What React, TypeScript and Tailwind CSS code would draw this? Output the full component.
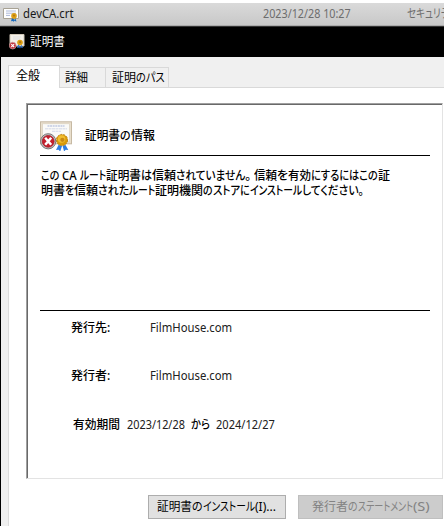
import { useLayoutEffect, useRef, useState } from "react";

const JP = "font-['Noto_Sans','Noto_Sans_CJK_JP',sans-serif]";

// A run of text condensed or widened to the width its class gives it.
function Run({ w, children }: { w: string; children: string }) {
  const outer = useRef<HTMLSpanElement>(null);
  const inner = useRef<HTMLSpanElement>(null);
  const [scale, setScale] = useState(1);
  useLayoutEffect(() => {
    if (outer.current && inner.current) {
      setScale(outer.current.clientWidth / inner.current.offsetWidth);
    }
  }, [children]);
  return (
    <span ref={outer} className={`flex shrink-0 ${w}`}>
      <span
        ref={inner}
        className="shrink-0 origin-left whitespace-pre [font-feature-settings:'palt']"
        style={{ transform: `scaleX(${scale})` }}
      >
        {children}
      </span>
    </span>
  );
}

function Rosette() {
  return (
    <g>
      <path d="M18.5 24l-2.5 5 2.6-.2 1.6 1.7 2-6zM25.5 24l2.8 5-2.6-.2-1.6 1.7-1.6-6z" fill="#2f7de0" />
      <circle cx="22" cy="19" r="5.6" fill="#d99a08" stroke="#c08410" strokeWidth="1" strokeDasharray="2 1" />
      <circle cx="21.6" cy="18" r="3.8" fill="#f1bd30" />
      <circle cx="22.4" cy="18.8" r="2.1" fill="#c88912" />
    </g>
  );
}

function InvalidCertificate({ className }: { className: string }) {
  return (
    <svg viewBox="0 0 34 30" className={className}>
      <rect x=".5" y=".8" width="31" height="22" fill="#e9dfcd" stroke="#c6b9a3" />
      <rect x="2.5" y="2.8" width="27" height="18" fill="#fafaf8" stroke="#d8cdba" strokeWidth=".6" />
      <path d="M7.5 5h17" stroke="#a3b0d5" strokeWidth="1" strokeDasharray="2 .6" />
      <path d="M5 7.8h22M12 10.3h9" stroke="#c9d0e4" strokeWidth=".8" strokeDasharray="3 .5" />
      <Rosette />
      <circle cx="8.2" cy="20.3" r="7.6" fill="#c4c4c4" stroke="#777" strokeWidth="1" />
      <circle cx="8.2" cy="20.3" r="5.9" fill="#c51f2d" stroke="#a21420" strokeWidth=".7" />
      <path d="M5.2 16.8l6 7M11.2 16.8l-6 7" stroke="white" strokeWidth="2.5" />
    </svg>
  );
}

function SmallInvalid() {
  return (
    <svg viewBox="0 0 16 16" className="h-4 w-4 shrink-0">
      <path d="M1 .5h14v11.5H1z" fill="#f4f0e8" stroke="#d0c7b8" />
      <path d="M4 3h8M4 5h7" stroke="#d6d8e0" strokeWidth=".7" />
      <path d="M9.3 10L8 14l2-.5 1 1 1.3-4zM12 10l2 4-2-.4-1 1L10 10z" fill="#2e76cf" />
      <circle cx="11" cy="8.5" r="2.8" fill="#dc9d12" />
      <circle cx="11" cy="8.2" r="1.1" fill="#ad7711" />
      <circle cx="3.7" cy="11.6" r="3.4" fill="#c4343d" stroke="#c9a5a5" strokeWidth=".7" />
      <path d="M2.3 10.2l2.8 2.8m0-2.8l-2.8 2.8" stroke="white" strokeWidth="1.1" />
    </svg>
  );
}

function FileCertificate() {
  return (
    <svg viewBox="0 0 17 15" className="h-[15px] w-[17px] shrink-0">
      <path d="M.5 1.5h15v10H.5z" fill="#fff" stroke="#a8a294" />
      <path d="M3 4h10M3 6.2h10M3 8.4h4" stroke="#98a7cf" strokeWidth=".8" />
      <path d="M9.3 10L8 14.3l2-.3.8 1 1.2-4zM12 10l1.5 4.5L11.5 14 10 10z" fill="#1769bc" />
      <circle cx="11" cy="8.9" r="2.8" fill="#dda017" />
      <circle cx="11" cy="8.6" r="1.1" fill="#b67b15" />
    </svg>
  );
}

function Issued({ label, top }: { label: string; top: string }) {
  return (
    <div className={`flex h-4 items-center ${top}`}>
      <div className="flex w-[79px] font-medium text-black"><Run w="w-[39px]">{label}</Run></div>
      <Run w="w-[82px]">FilmHouse.com</Run>
    </div>
  );
}

export default function App() {
  return (
    <div className={`h-[526px] w-[444px] overflow-hidden bg-white pt-[3px] text-[12px] leading-4 text-[#202020] ${JP}`}>
      <div className="flex h-[22px] items-center bg-gradient-to-b from-[#dadada] to-[#c8c8c8] pl-[3px]">
        <FileCertificate />
        <div className="ml-[3px] flex w-[240px] shrink-0 text-[#191919]"><Run w="w-[51px]">devCA.crt</Run></div>
        <div className="flex w-36 shrink-0 text-[#6d6d6d]"><Run w="w-[88px]">2023/12/28 10:27</Run></div>
        <div className="flex shrink-0 text-[#6d6d6d]"><Run w="w-[34px]">セキュリ</Run><Run w="w-[16px]">ティ</Run></div>
      </div>
      <div className="h-px bg-[#aaa]" />
      <div className="flex h-[31px] items-center border-t border-[#333] bg-black pl-[9px] text-white">
        <SmallInvalid />
        <div className="ml-[5px]"><Run w="w-[35px]">証明書</Run></div>
      </div>
      <div className="h-[469px] border-l border-black bg-[#f0f0f0] pl-[7px] pt-2">
        <div className="flex h-[23px] items-end text-black">
          <div className="z-10 flex h-[23px] w-[52px] items-center border-l border-t border-r border-[#d9d9d9] bg-white pl-[7px] pb-[2px]"><Run w="w-6">全般</Run></div>
          <div className="flex h-[21px] w-[46px] items-center border-t border-r border-b border-[#d9d9d9] pl-[5px]"><Run w="w-[23px]">詳細</Run></div>
          <div className="flex h-[21px] w-[63px] items-center border-t border-r border-b border-[#d9d9d9] pl-[6px]"><Run w="w-6">証明</Run><Run w="w-[29px]">のパス</Run></div>
          <div className="h-px flex-1 bg-[#d9d9d9]" />
        </div>
        <div className="h-[438px] border-l border-[#dcdcdc] bg-white pl-[17px] pt-[15px]">
          <div className="h-[376px] w-[417px] border-l border-t border-r border-b border-l-[#a0a0a0] border-t-[#a0a0a0] border-r-[#e3e3e3] border-b-[#e3e3e3]">
            <div className="h-full border-l border-t border-[#696969] pl-3 pr-3">
              <div className="flex h-[51px] w-[390px] border-b border-black pt-4 font-medium text-black">
                <InvalidCertificate className="h-[30px] w-[34px]" />
                <div className="ml-[11px] mt-[7px] flex"><Run w="w-[35px]">証明書</Run><Run w="w-[11px]">の</Run><Run w="w-[24px]">情報</Run></div>
              </div>
              <div className="flex h-[155px] w-[390px] flex-col border-b border-black pt-3 pl-px font-medium leading-[15px] text-black">
                <div className="flex h-[15px]">
                  <Run w="w-[21px]">{"この "}</Run><Run w="w-[18px]">{"CA "}</Run><Run w="w-[26px]">ルート</Run><Run w="w-[35px]">証明書</Run><Run w="w-[11px]">は</Run><Run w="w-6">信頼</Run><Run w="w-[69px]">されていません</Run><Run w="w-[9px]">{"。 "}</Run><Run w="w-[23px]">信頼</Run><Run w="w-[11px]">を</Run><Run w="w-[23px]">有効</Run><Run w="w-[67px]">にするにはこの</Run><Run w="w-3">証</Run>
                </div>
                <div className="flex h-[15px]">
                  <Run w="w-[24px]">明書</Run><Run w="w-[9px]">を</Run><Run w="w-[24px]">信頼</Run><Run w="w-[31px]">された</Run><Run w="w-[26px]">ルート</Run><Run w="w-[48px]">証明機関</Run><Run w="w-[10px]">の</Run><Run w="w-[27px]">ストア</Run><Run w="w-[10px]">に</Run><Run w="w-[52px]">インストール</Run><Run w="w-[62px]">してください。</Run>
                </div>
              </div>
              <div className="pl-[31px]">
                <Issued label="発行先:" top="mt-[9px]" />
                <Issued label="発行者:" top="mt-8" />
                <div className="mt-[33px] flex h-4 items-center pl-[2px]">
                  <div className="w-[54px] font-medium text-black"><Run w="w-[47px]">有効期間</Run></div>
                  <div className="w-16"><Run w="w-[58px]">2023/12/28</Run></div>
                  <div className="w-[25px] font-medium text-black"><Run w="w-[19px]">から</Run></div>
                  <Run w="w-[59px]">2024/12/27</Run>
                </div>
              </div>
            </div>
          </div>
          <div className="mt-4 ml-[122px] flex gap-3">
            <button className="flex h-6 w-[138px] items-center border border-[#adadad] bg-[#e1e1e1] pl-[8px] text-black"><Run w="w-[35px]">証明書</Run><Run w="w-[11px]">の</Run><Run w="w-[52px]">インストール</Run><Run w="w-[21px]">(I)...</Run></button>
            <button className="flex h-6 w-[145px] items-center border border-[#bfbfbf] bg-[#cccccc] pl-[13px] text-[#838383]"><Run w="w-[36px]">発行者</Run><Run w="w-[10px]">の</Run><Run w="w-[55px]">ステートメント</Run><Run w="w-[17px]">(S)</Run></button>
          </div>
        </div>
      </div>
    </div>
  );
}
